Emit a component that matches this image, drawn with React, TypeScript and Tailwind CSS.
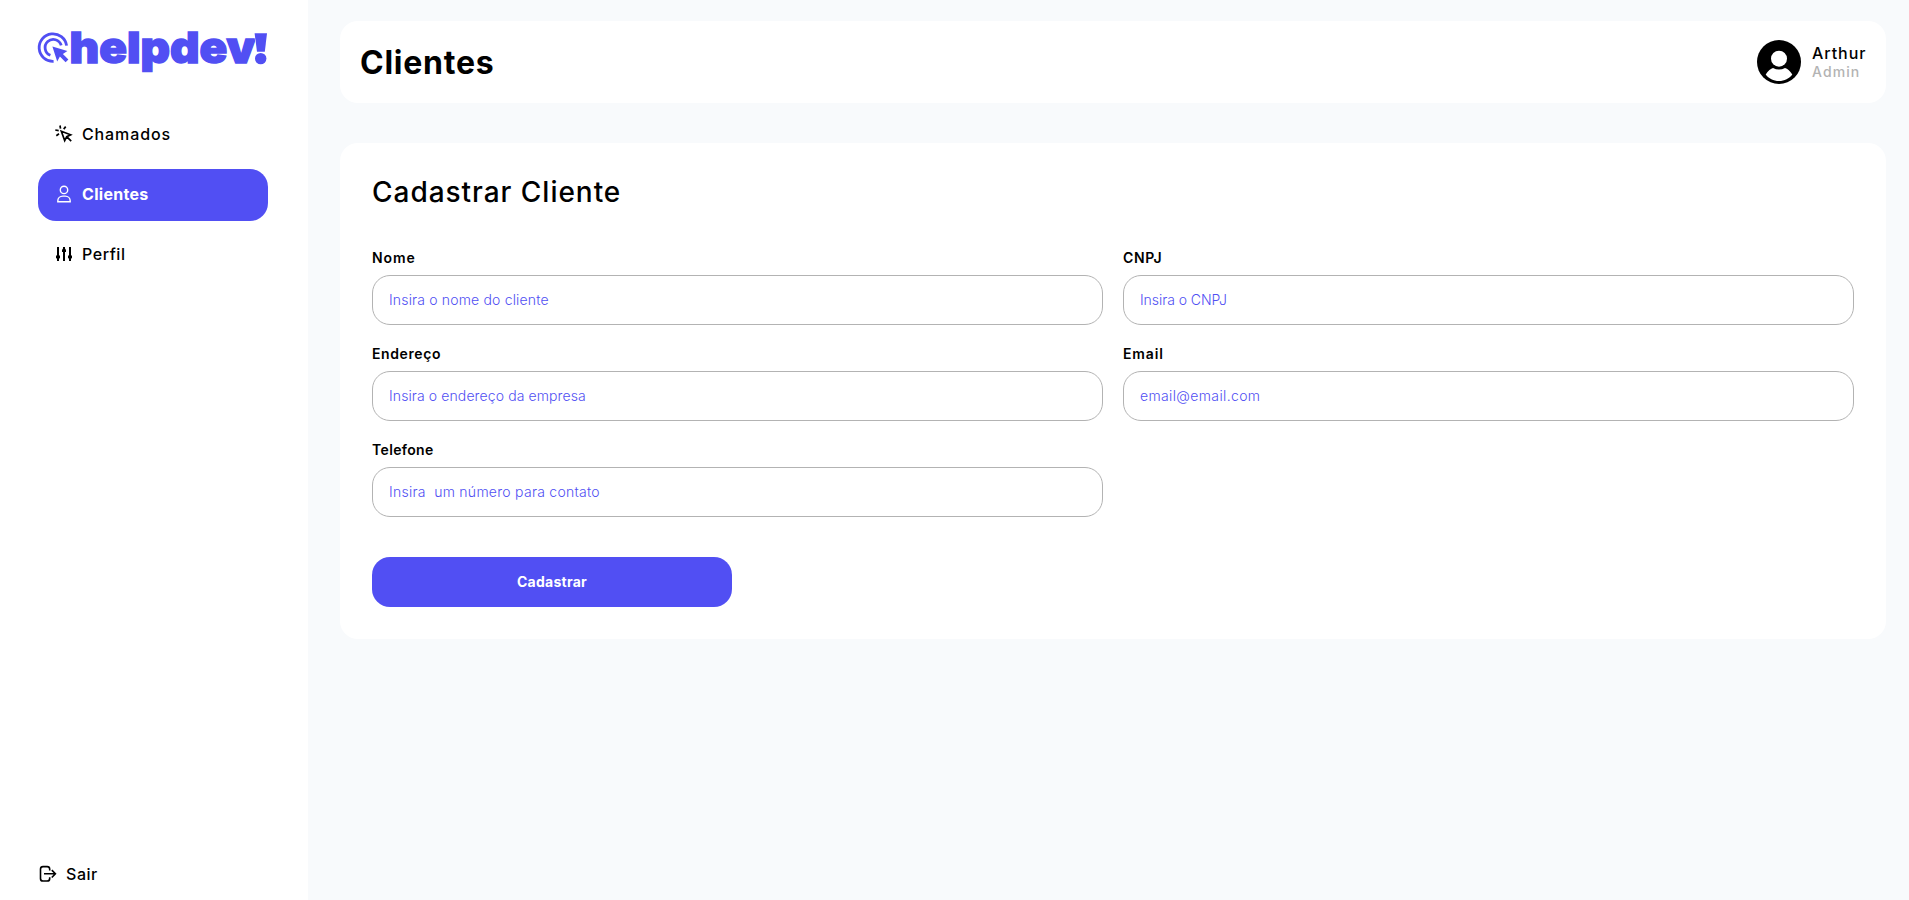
import React from "react";

type FieldProps = { label: string; labelClass: string; placeholder: string; inputClass: string; type?: string };

function Field({ label, labelClass, placeholder, inputClass, type = "text" }: FieldProps) {
  return (
    <label className="flex flex-col gap-1">
      <span className={`flex h-[26px] items-center text-[14px] font-semibold leading-none text-black ${labelClass}`}>{label}</span>
      <input
        type={type}
        placeholder={placeholder}
        className={`h-[50px] w-full rounded-[18px] border border-[#b3b3b3] bg-white px-4 pb-px text-[14px] font-light text-[#514ff3] outline-none placeholder:whitespace-pre placeholder:text-[#514ff3] ${inputClass}`}
      />
    </label>
  );
}

function Logo() {
  return (
    <svg className="h-[60px] w-[234px] overflow-visible" viewBox="0 0 234 60" fill="none" role="img" aria-label="helpdev!">
      <g stroke="#514ff3" strokeWidth="2.8">
        <path d="M29.6 17.6A13.8 13.8 0 1 0 16.6 33.4" />
        <path d="M24.2 17.4A8.2 8.2 0 1 0 13.4 27.3" />
      </g>
      <path d="M15.4 18.6L30.4 23L25.9 25.9L31.4 31.4L28.6 34.2L22.9 28.5L20.2 33.4Z" fill="#514ff3" />
      <text x="32.5" y="35" fill="#514ff3" stroke="#514ff3" strokeWidth="1.4" textLength="186" lengthAdjust="spacingAndGlyphs" className="font-[Inter,sans-serif] text-[43px] font-black leading-none">helpdev</text>
      <path d="M217.6 5.2H230L227.8 23.8H220Z" fill="#514ff3" stroke="#fff" strokeWidth="1" paintOrder="stroke" />
      <circle cx="223.7" cy="30.6" r="5.7" fill="#514ff3" />
    </svg>
  );
}

const ClickIcon = () => (
  <svg className="-mt-px size-[18px]" viewBox="0 0 18 18" fill="none" stroke="currentColor" strokeWidth="1.7">
    <path d="M6.3 6.3L15.6 9.8L11.7 11.7L9.7 15.6ZM11.7 11.7L16.2 16.2M5 0.5L5.5 3.6M10.7 1.6L8.7 4.1M0.3 5L3.7 5.6M1.3 10.8L4 8.8" />
  </svg>
);

const UserIcon = () => (
  <svg className="size-[18px]" viewBox="0 0 18 18" fill="none" stroke="currentColor" strokeWidth="1.4">
    <circle cx="9" cy="4.9" r="3.7" />
    <path d="M2.8 16.7V16C2.8 13 5 11.1 7.8 11.1H10.2C13 11.1 15.2 13 15.2 16V16.7Z" />
  </svg>
);

const SlidersIcon = () => (
  <svg className="size-[18px]" viewBox="0 0 18 18" fill="none" stroke="currentColor" strokeWidth="2">
    <path d="M3 2V16M9 2V16M15 2V16" />
    <g fill="currentColor" stroke="none">
      <path d="M1 10.5H5V12.5L4 14H2L1 12.5Z" />
      <path d="M7 7V5L8 3.5H10L11 5V7Z" />
      <path d="M13 10.5H17V12.5L16 14H14L13 12.5Z" />
    </g>
  </svg>
);

const ExitIcon = () => (
  <svg className="size-[18px]" viewBox="0 0 18 18" fill="none" stroke="currentColor" strokeWidth="1.6">
    <path d="M10.7 5.5V4A2.5 2.5 0 0 0 8.2 1.6H4A2.5 2.5 0 0 0 1.5 4V13.6A2.5 2.5 0 0 0 4 16H8.2A2.5 2.5 0 0 0 10.7 13.6V12.2M5 8.8H16.2M12.8 5.1L16.4 8.8L12.8 12.5" />
  </svg>
);

const Avatar = () => (
  <svg className="size-11" viewBox="0 0 44 44">
    <circle cx="22" cy="22" r="22" fill="#000" />
    <circle cx="22" cy="18.7" r="8" fill="#fff" />
    <path d="M8.7 34.5C11 30.8 14 28.5 16 28Q22 31 28 28C30.5 28.7 33.3 31.3 35.3 34.5C32.3 38.5 27.5 41 22 41S11.7 38.5 8.7 34.5Z" fill="#fff" />
  </svg>
);

export default function App() {
  return (
    <div className="flex h-[900px] w-full bg-[#f8fafc] font-[Inter,sans-serif] text-black">
      <aside className="flex w-[308px] shrink-0 flex-col bg-white pb-[13px] pt-7">
        <div className="pl-[37px]"><Logo /></div>
        <nav className="mt-[21px] flex flex-col gap-2 pl-[38px]">
          <a className="flex h-[52px] w-[230px] items-center gap-[9px] pb-[2px] pl-[17px] text-[16px] font-medium tracking-[0.88px]"><ClickIcon />Chamados</a>
          <a className="flex h-[52px] w-[230px] items-center gap-[9px] rounded-[18px] bg-[#514ff3] pb-[2px] pl-[17px] text-[16px] font-bold tracking-[0.3px] text-white"><UserIcon />Clientes</a>
          <a className="flex h-[52px] w-[230px] items-center gap-[9px] pb-[2px] pl-[17px] text-[16px] font-medium tracking-[0.55px]"><SlidersIcon />Perfil</a>
        </nav>
        <a className="mt-auto flex h-[26px] items-center gap-[9px] pl-[39px] text-[16px] font-medium tracking-[0.55px]"><ExitIcon />Sair</a>
      </aside>
      <main className="flex flex-1 flex-col gap-10 pl-8 pr-[23px] pt-[21px]">
        <header className="flex h-[82px] items-center justify-between rounded-[18px] bg-white px-5">
          <h1 className="pt-[2px] text-[32px] font-bold tracking-[0.75px]">Clientes</h1>
          <div className="flex items-center gap-[11px]">
            <Avatar />
            <div className="flex w-[54px] flex-col">
              <span className="text-[16px] font-medium leading-[19px] tracking-[0.95px]">Arthur</span>
              <span className="text-[14px] font-medium leading-[18px] tracking-[1.1px] text-[#b3b3b3]">Admin</span>
            </div>
          </div>
        </header>
        <section className="flex h-[496px] flex-col rounded-[18px] bg-white px-8 pt-8">
          <h2 className="text-[28px] font-medium leading-[34px] tracking-[0.97px]">Cadastrar Cliente</h2>
          <form className="mt-9 flex flex-col gap-10">
            <div className="grid grid-cols-2 gap-x-5 gap-y-4">
              <Field label="Nome" labelClass="tracking-[0.95px]" placeholder="Insira o nome do cliente" inputClass="tracking-[0.17px]" />
              <Field label="CNPJ" labelClass="tracking-[0.6px]" placeholder="Insira o CNPJ" inputClass="-tracking-[0.05px]" />
              <Field label="Endereço" labelClass="tracking-[0.6px]" placeholder="Insira o endereço da empresa" inputClass="tracking-[0.11px]" />
              <Field label="Email" labelClass="tracking-[0.85px]" placeholder="email@email.com" inputClass="tracking-[0.36px]" type="email" />
              <Field label="Telefone" labelClass="tracking-[0.35px]" placeholder="Insira  um número para contato" inputClass="tracking-[0.27px]" />
            </div>
            <button type="button" className="h-[50px] w-[360px] rounded-[18px] bg-[#514ff3] pb-px text-[14px] font-bold tracking-[0.25px] text-white">Cadastrar</button>
          </form>
        </section>
      </main>
    </div>
  );
}
